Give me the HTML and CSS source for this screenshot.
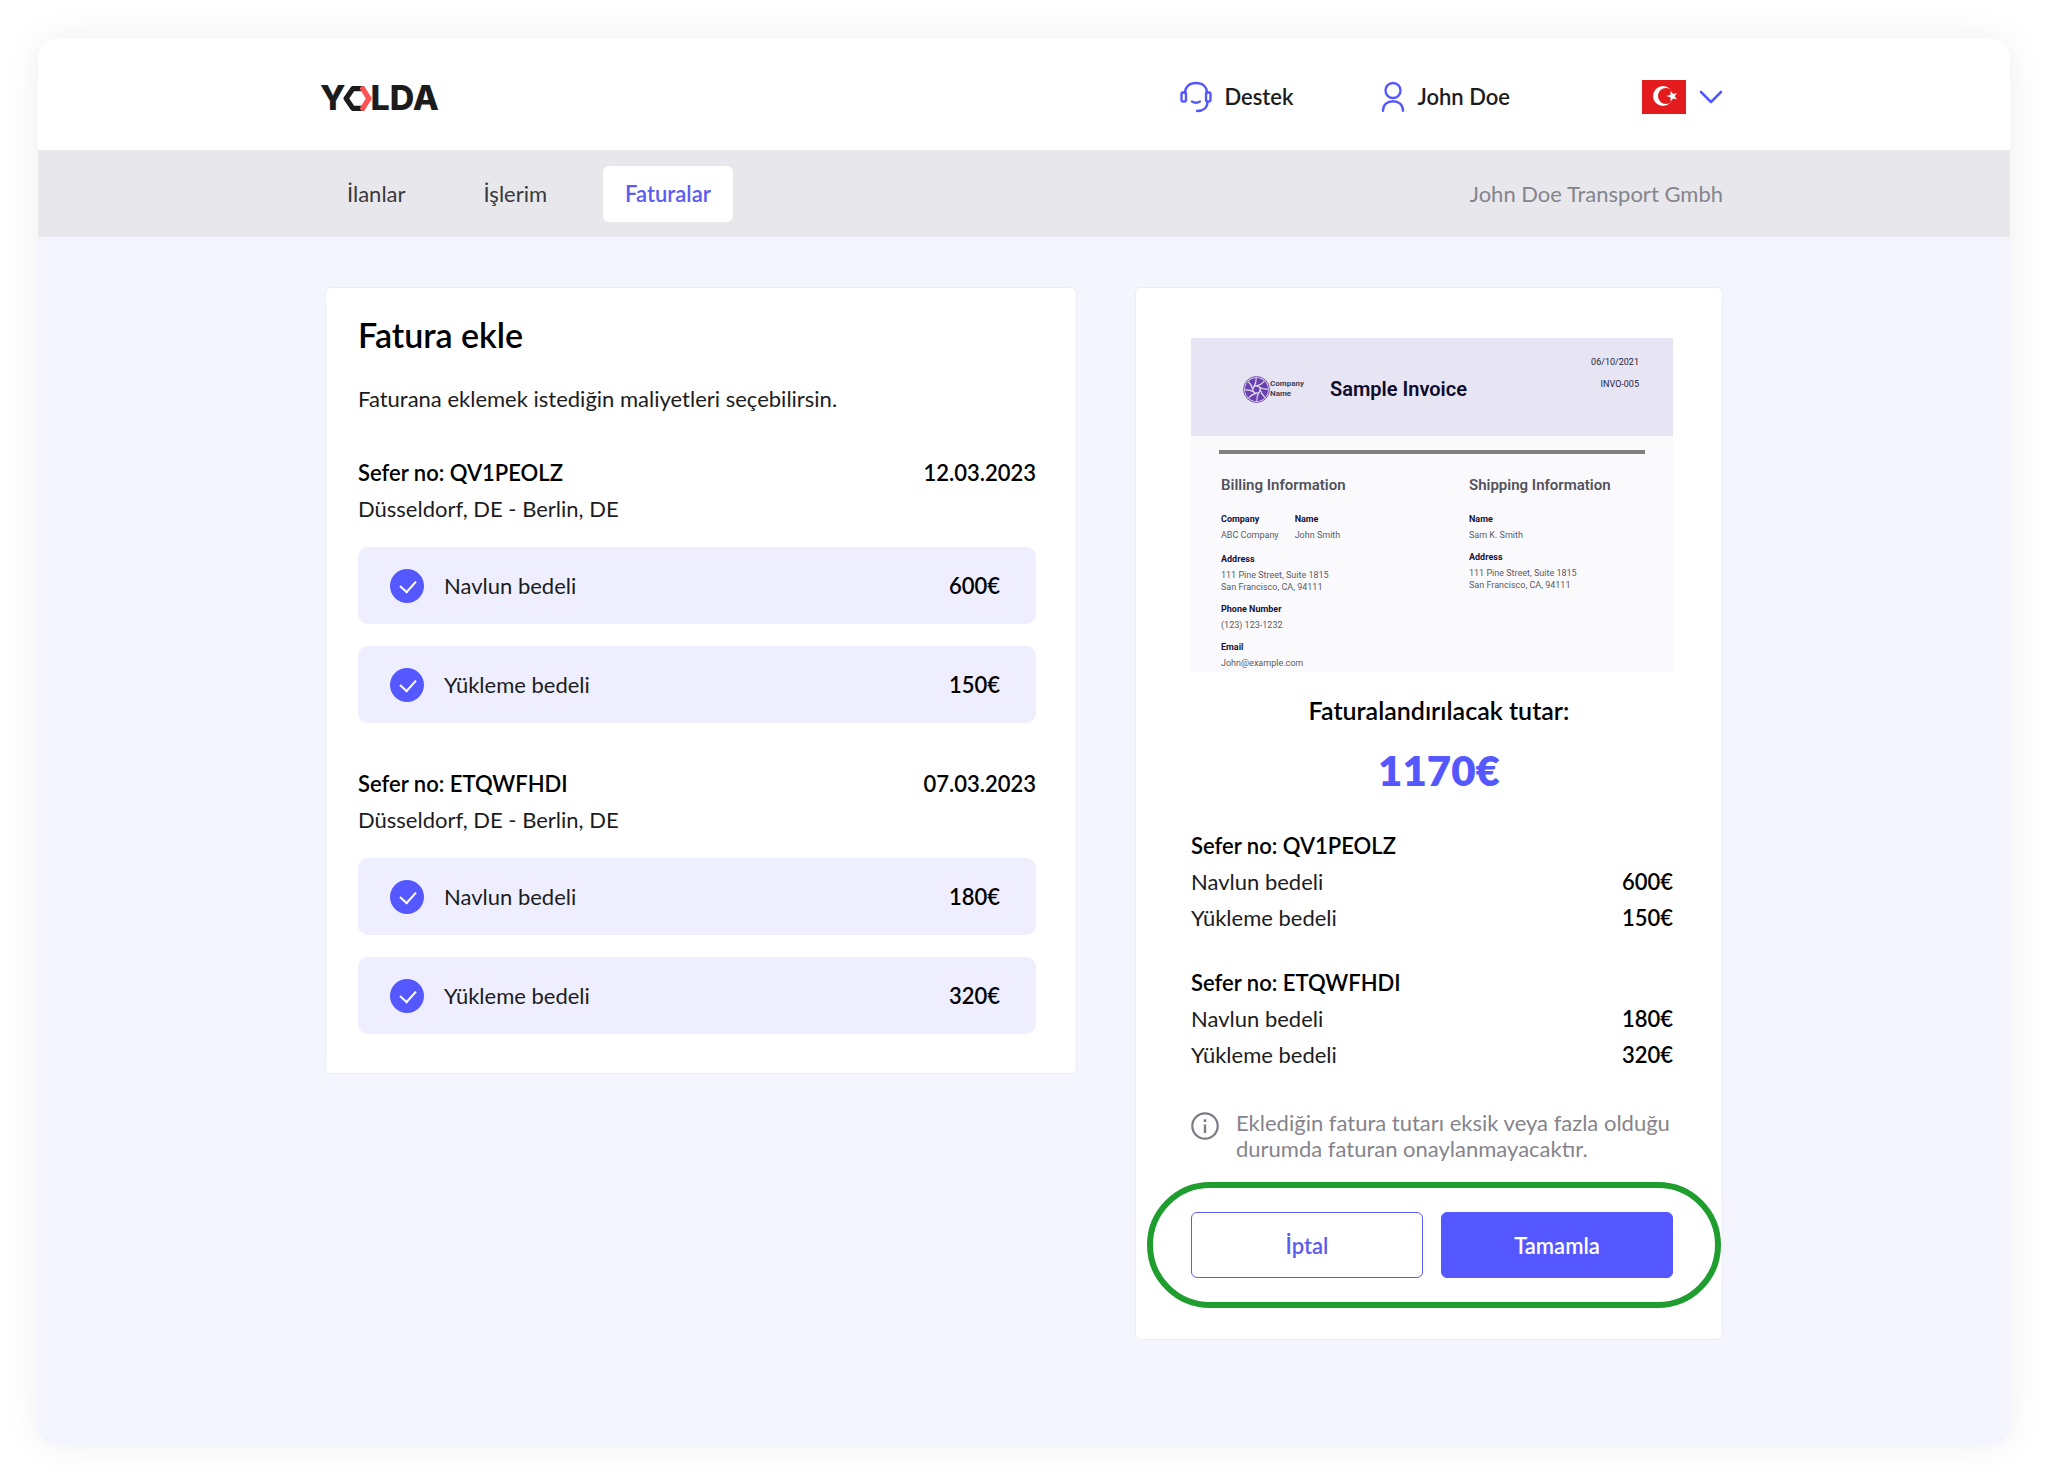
FILE: index.html
```html
<!DOCTYPE html>
<html lang="tr">

<head>
    <meta charset="UTF-8">
    <meta name="viewport" content="width=device-width, initial-scale=1.0">
    <title>Yolda - Fatura ekle</title>
    <link rel="stylesheet" href="styles.css">
</head>

<body>

    <div class="app">

        <!-- Header -->
        <header class="header">
            <div class="wrap header-inner">
                <a href="#" class="logo" aria-label="Yolda">
                    <span>Y</span>
                    <svg class="logo-hex" viewBox="0 0 28 24" fill="none" stroke-width="5" stroke-linejoin="round" stroke-linecap="round">
                        <path d="M19 2.500H9.500L3 12l6.500 9.500H19" stroke="#1c1c1c" />
                        <path d="M19 2.500L25 12l-6 9.500" stroke="#ff5353" />
                    </svg>
                    <span>LDA</span>
                </a>
                <div class="header-menu">
                    <a href="#" class="header-link support">
                        <svg width="32" height="32" viewBox="0 0 32 32" fill="none" stroke="#5558ff" stroke-width="2.4" stroke-linecap="round" stroke-linejoin="round">
                            <path d="M5 12C5 5.500 9.500 2 16 2s11 3.500 11 10" />
                            <rect x="1.500" y="11.500" width="4.500" height="9" rx="1.200" />
                            <rect x="26" y="11.500" width="4.500" height="9" rx="1.200" />
                            <path d="M12 20.500c2.500 1.500 5.500 1.500 8 0" />
                            <path d="M27.500 21c0 5.500-4 8.800-10.500 9" />
                        </svg>
                        Destek
                    </a>
                    <a href="#" class="header-link account">
                        <svg width="24" height="32" viewBox="0 0 24 32" fill="none" stroke="#5558ff" stroke-width="2.4" stroke-linecap="round">
                            <circle cx="12" cy="9.500" r="7.500" />
                            <path d="M2 29.800C2 23.500 6.500 20.200 12 20.200s10 3.300 10 9.600" />
                        </svg>
                        John Doe
                    </a>
                    <button type="button" class="lang" aria-label="Türkçe">
                        <svg width="44" height="34" viewBox="0 0 44 34">
                            <rect width="44" height="34" fill="#e41b1c" />
                            <circle cx="21" cy="16" r="10" fill="#fff" />
                            <circle cx="24" cy="16" r="8" fill="#e41b1c" />
                            <path d="M24.500 16l4-1.200.2-4 2.400 3.200 3.900-1.100-2.300 3.300 2.300 3.300-3.900-1.100-2.400 3.100-.1-4z" fill="#fff" />
                        </svg>
                        <svg width="24" height="14" viewBox="0 0 24 14" fill="none" stroke="#5558ff" stroke-width="2.6" stroke-linecap="round" stroke-linejoin="round">
                            <path d="M2 2l10 10L22 2" />
                        </svg>
                    </button>
                </div>
            </div>
        </header>

        <!-- Tabs -->
        <nav class="nav">
            <div class="wrap nav-inner">
                <div class="tabs">
                    <a href="#" class="tab">İlanlar</a>
                    <a href="#" class="tab">İşlerim</a>
                    <a href="#" class="tab active">Faturalar</a>
                </div>
                <span class="company">John Doe Transport Gmbh</span>
            </div>
        </nav>

        <main class="wrap content">

            <!-- Cost selection -->
            <section class="card costs">
                <h1>Fatura ekle</h1>
                <p class="intro">Faturana eklemek istediğin maliyetleri seçebilirsin.</p>

                <div class="trip">
                    <div class="trip-head">
                        <h2>Sefer no: QV1PEOLZ</h2>
                        <span class="strong">12.03.2023</span>
                    </div>
                    <p class="route">Düsseldorf, DE - Berlin, DE</p>
                    <label class="cost">
                        <input type="checkbox" checked>
                        <span>Navlun bedeli</span>
                        <span class="amount">600€</span>
                    </label>
                    <label class="cost">
                        <input type="checkbox" checked>
                        <span>Yükleme bedeli</span>
                        <span class="amount">150€</span>
                    </label>
                </div>

                <div class="trip">
                    <div class="trip-head">
                        <h2>Sefer no: ETQWFHDI</h2>
                        <span class="strong">07.03.2023</span>
                    </div>
                    <p class="route">Düsseldorf, DE - Berlin, DE</p>
                    <label class="cost">
                        <input type="checkbox" checked>
                        <span>Navlun bedeli</span>
                        <span class="amount">180€</span>
                    </label>
                    <label class="cost">
                        <input type="checkbox" checked>
                        <span>Yükleme bedeli</span>
                        <span class="amount">320€</span>
                    </label>
                </div>
            </section>

            <!-- Summary -->
            <section class="card summary">
                <div class="invoice">
                    <div class="invoice-head">
                        <svg class="invoice-logo" viewBox="0 0 28 28" fill="none">
                            <circle cx="14" cy="14" r="13.400" stroke="#6a3fb0" stroke-width="1" />
                            <circle cx="14" cy="14" r="12" fill="#6a3fb0" />
                            <circle cx="14" cy="14" r="3.800" stroke="#e7e4f3" stroke-width="1.200" />
                            <g stroke="#e7e4f3" stroke-width="1.200">
                                <path id="blade" d="M14 10.200Q19 9 22 5.500" />
                                <use href="#blade" transform="rotate(45 14 14)" />
                                <use href="#blade" transform="rotate(90 14 14)" />
                                <use href="#blade" transform="rotate(135 14 14)" />
                                <use href="#blade" transform="rotate(180 14 14)" />
                                <use href="#blade" transform="rotate(225 14 14)" />
                                <use href="#blade" transform="rotate(270 14 14)" />
                                <use href="#blade" transform="rotate(315 14 14)" />
                            </g>
                        </svg>
                        <span class="invoice-company">Company<br>Name</span>
                        <h3>Sample Invoice</h3>
                        <div class="invoice-meta">
                            <span>06/10/2021</span>
                            <span>INVO-005</span>
                        </div>
                    </div>
                    <div class="invoice-body">
                        <div class="billing">
                            <h4>Billing Information</h4>
                            <div class="pair">
                                <dl>
                                    <dt>Company</dt>
                                    <dd>ABC Company</dd>
                                </dl>
                                <dl>
                                    <dt>Name</dt>
                                    <dd>John Smith</dd>
                                </dl>
                            </div>
                            <dl>
                                <dt>Address</dt>
                                <dd>111 Pine Street, Suite 1815<br>San Francisco, CA, 94111</dd>
                                <dt>Phone Number</dt>
                                <dd>(123) 123-1232</dd>
                                <dt>Email</dt>
                                <dd>John@example.com</dd>
                            </dl>
                        </div>
                        <div class="shipping">
                            <h4>Shipping Information</h4>
                            <dl>
                                <dt>Name</dt>
                                <dd>Sam K. Smith</dd>
                                <dt>Address</dt>
                                <dd>111 Pine Street, Suite 1815<br>San Francisco, CA, 94111</dd>
                            </dl>
                        </div>
                    </div>
                </div>

                <div class="total">
                    <p class="total-label">Faturalandırılacak tutar:</p>
                    <p class="total-value">1170€</p>
                </div>

                <div class="lines">
                    <h2>Sefer no: QV1PEOLZ</h2>
                    <div class="line"><span>Navlun bedeli</span><span class="amount">600€</span></div>
                    <div class="line"><span>Yükleme bedeli</span><span class="amount">150€</span></div>
                </div>
                <div class="lines">
                    <h2>Sefer no: ETQWFHDI</h2>
                    <div class="line"><span>Navlun bedeli</span><span class="amount">180€</span></div>
                    <div class="line"><span>Yükleme bedeli</span><span class="amount">320€</span></div>
                </div>

                <div class="note">
                    <svg width="28" height="28" viewBox="0 0 28 28" fill="none" stroke="#7b7a85">
                        <circle cx="14" cy="14" r="12.700" stroke-width="2.200" />
                        <path d="M14 12.500V21" stroke-width="2.400" />
                        <path d="M14 7.300v2.700" stroke-width="2.600" />
                    </svg>
                    <p>Eklediğin fatura tutarı eksik veya fazla olduğu durumda faturan onaylanmayacaktır.</p>
                </div>

                <div class="actions">
                    <button type="button" class="btn">İptal</button>
                    <button type="button" class="btn btn-primary">Tamamla</button>
                </div>
            </section>

        </main>
    </div>

</body>

</html>
```

FILE: styles.css
```css
* {
    box-sizing: border-box;
}

body {
    margin: 0;
    padding: 38px;
    background-color: #fff;
    color: #1c1c1e;
    font-family: Lato, "Noto Sans", sans-serif;
    font-size: 22px;
    line-height: 36px;
}

h1,
h2,
h3,
h4,
p,
dl,
dd {
    margin: 0;
}

a {
    color: inherit;
    text-decoration: none;
}

button {
    font-family: inherit;
    font-size: 22px;
    cursor: pointer;
}

h2,
.strong,
.amount {
    font-size: 22px;
    font-weight: 600;
    color: #000;
}

.app {
    min-height: calc(100vh - 76px);
    border-radius: 20px;
    overflow: hidden;
    background-color: #f4f5ff;
    box-shadow: 0 0 36px rgba(0, 0, 0, 0.07);
}

.wrap {
    max-width: 1398px;
    margin: 0 auto;
}

/* Header */
.header {
    background-color: #fff;
}

.header-inner,
.nav-inner {
    display: flex;
    align-items: center;
    justify-content: space-between;
}

.header-inner {
    height: 112px;
    padding-top: 5px;
}

.logo {
    display: flex;
    align-items: center;
    margin-left: -5px;
    padding-top: 3px;
    color: #1c1c1c;
    font-family: Inter, sans-serif;
    font-size: 34px;
    font-weight: 800;
}

.logo-hex {
    width: 29px;
    height: 25px;
    margin: 0 -1px 0 -3px;
}

.header-menu,
.header-link,
.lang {
    display: flex;
    align-items: center;
}

.header-link {
    gap: 12px;
    font-weight: 600;
}

.support {
    margin-right: 88px;
}

.account {
    margin-right: 132px;
}

.lang {
    gap: 13px;
    padding: 0;
    border: none;
    background: none;
}

/* Tabs */
.nav {
    background-color: #e8e8ec;
}

.nav-inner {
    height: 87px;
}

.tabs {
    display: flex;
    gap: 34px;
}

.tab {
    padding: 10px 22px;
    border-radius: 6px;
    color: #38383d;
}

.tab.active {
    background-color: #fff;
    color: #5b5cf0;
    font-weight: 600;
}

.company {
    color: #85848d;
}

/* Cards */
.content {
    display: grid;
    grid-template-columns: 752fr 588fr;
    align-items: start;
    gap: 58px;
    padding: 50px 0;
}

.card {
    border: 1px solid #ebecf5;
    border-radius: 6px;
    background-color: #fff;
}

.costs {
    padding: 27px 40px 39px 32px;
}

.costs h1 {
    font-size: 34px;
    line-height: 40px;
    font-weight: 600;
    color: #000;
}

.intro {
    margin-top: 26px;
}

.trip {
    margin-top: 38px;
}

.trip + .trip {
    margin-top: 43px;
}

.trip-head {
    display: flex;
    justify-content: space-between;
}

.route {
    margin-bottom: 20px;
}

.cost {
    display: flex;
    align-items: center;
    gap: 20px;
    height: 77px;
    padding: 0 36px 0 32px;
    border-radius: 10px;
    background-color: #eeeeff;
    cursor: pointer;
}

.cost + .cost {
    margin-top: 22px;
}

.cost input {
    position: relative;
    width: 34px;
    height: 34px;
    margin: 0;
    border-radius: 50%;
    appearance: none;
    background-color: #d0d0e0;
    cursor: pointer;
}

.cost input:checked {
    background-color: #5558ff;
}

.cost input:checked::after {
    content: "";
    position: absolute;
    top: 8px;
    left: 13px;
    width: 8px;
    height: 13px;
    border: solid #fff;
    border-width: 0 2px 2px 0;
    transform: rotate(42deg);
}

.amount {
    margin-left: auto;
}

/* Summary */
.summary {
    padding: 50px 49px 31px 55px;
}

.invoice {
    padding-bottom: 3px;
    background-color: #fafafc;
    color: #5b5b66;
    font-family: Roboto, sans-serif;
    font-size: 9px;
    line-height: 12px;
}

.invoice-head {
    display: flex;
    align-items: center;
    height: 98px;
    padding: 4px 34px 0 52px;
    background-color: #e7e4f3;
}

.invoice-logo {
    width: 27px;
    height: 27px;
}

.invoice-company {
    width: 60px;
    color: #45434f;
    font-size: 8px;
    line-height: 10px;
    font-weight: 700;
}

.invoice-head h3 {
    color: #0e0b2b;
    font-size: 20px;
    line-height: 24px;
    font-weight: 600;
}

.invoice-meta {
    display: flex;
    flex-direction: column;
    align-self: flex-start;
    gap: 10px;
    margin-top: 14px;
    margin-left: auto;
    color: #26243c;
    text-align: right;
}

.invoice-body {
    display: flex;
    margin: 14px 28px 0;
    padding: 21px 2px 0;
    border-top: 4px solid #808080;
}

.billing {
    width: 248px;
}

.invoice h4 {
    margin-bottom: 17px;
    font-size: 15px;
    line-height: 20px;
    font-weight: 600;
    color: #53525e;
}

.pair {
    display: flex;
    gap: 16px;
    margin-bottom: 11px;
}

.invoice dt {
    color: #17143a;
    font-weight: 700;
    line-height: 14px;
}

.invoice dd {
    padding-top: 3px;
}

.invoice dd + dt {
    margin-top: 9px;
}

.total {
    padding: 20px 0 0 14px;
    text-align: center;
    font-weight: 600;
}

.total-label {
    color: #000;
    font-size: 25px;
}

.total-value {
    margin: 16px 0 32px;
    color: #5558ff;
    font-size: 42px;
    line-height: 52px;
    font-weight: 800;
}

.lines {
    margin-bottom: 29px;
}

.line {
    display: flex;
}

.note {
    display: flex;
    align-items: flex-start;
    gap: 17px;
    margin-top: 37px;
    color: #85848d;
    line-height: 26px;
}

.note svg {
    flex-shrink: 0;
    margin-top: 2px;
}

.actions {
    display: flex;
    gap: 18px;
    margin: 20px -48px 0 -44px;
    padding: 24px 42px 24px 38px;
    border: 6px solid #1f9d2f;
    border-radius: 63px;
}

.btn {
    flex: 1;
    height: 66px;
    border: 1px solid #5b5cf0;
    border-radius: 6px;
    background-color: #fff;
    color: #5b5cf0;
    font-weight: 600;
}

.btn-primary {
    border-color: #5558ff;
    background-color: #5558ff;
    color: #fff;
}
```
